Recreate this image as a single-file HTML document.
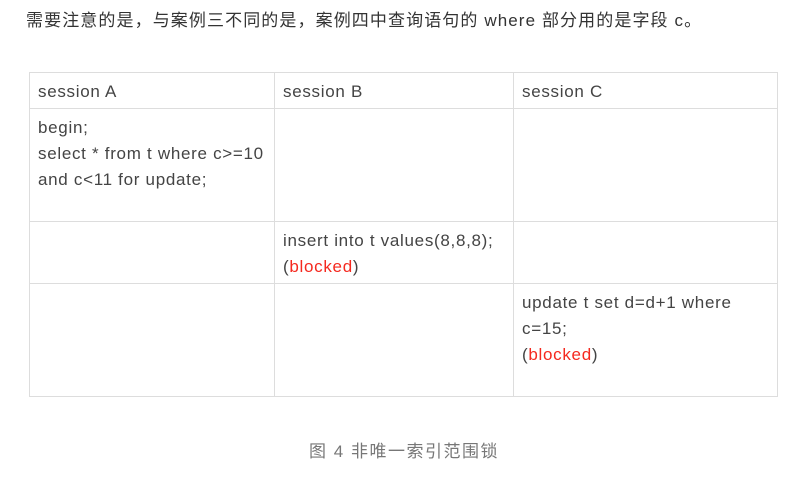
<!DOCTYPE html>
<html><head><meta charset="utf-8"><style>
body{margin:0;width:785px;height:479px;background:#fff;font-family:"Liberation Sans","Noto Sans CJK SC",sans-serif;position:relative;overflow:hidden}
.t{position:absolute;left:26px;top:6px;font-size:17px;letter-spacing:1.1px;color:#333;white-space:nowrap}
.c{position:absolute;box-sizing:border-box;border:1px solid #ddd;font-size:17px;letter-spacing:0.7px;line-height:26px;color:#444;padding:6px 8px;white-space:nowrap}
.r{color:#f5291f}
.cap{position:absolute;left:0;width:808px;text-align:center;top:437px;font-size:17px;letter-spacing:1.5px;color:#777}
</style></head><body>
<div class="t">需要注意的是，与案例三不同的是，案例四中查询语句的 where 部分用的是字段 c。</div>
<div class="c" style="left:29px;top:72px;width:246px;height:37px">session A</div>
<div class="c" style="left:274px;top:72px;width:240px;height:37px">session B</div>
<div class="c" style="left:513px;top:72px;width:265px;height:37px">session C</div>
<div class="c" style="left:29px;top:108px;width:246px;height:114px">begin;<br>select * from t where c&gt;=10<br>and c&lt;11 for update;</div>
<div class="c" style="left:274px;top:108px;width:240px;height:114px"></div>
<div class="c" style="left:513px;top:108px;width:265px;height:114px"></div>
<div class="c" style="left:29px;top:221px;width:246px;height:63px"></div>
<div class="c" style="left:274px;top:221px;width:240px;height:63px">insert into t values(8,8,8);<br>(<span class="r">blocked</span>)</div>
<div class="c" style="left:513px;top:221px;width:265px;height:63px"></div>
<div class="c" style="left:29px;top:283px;width:246px;height:114px"></div>
<div class="c" style="left:274px;top:283px;width:240px;height:114px"></div>
<div class="c" style="left:513px;top:283px;width:265px;height:114px">update t set d=d+1 where<br>c=15;<br>(<span class="r">blocked</span>)</div>
<div class="cap">图 4 非唯一索引范围锁</div>
</body></html>
